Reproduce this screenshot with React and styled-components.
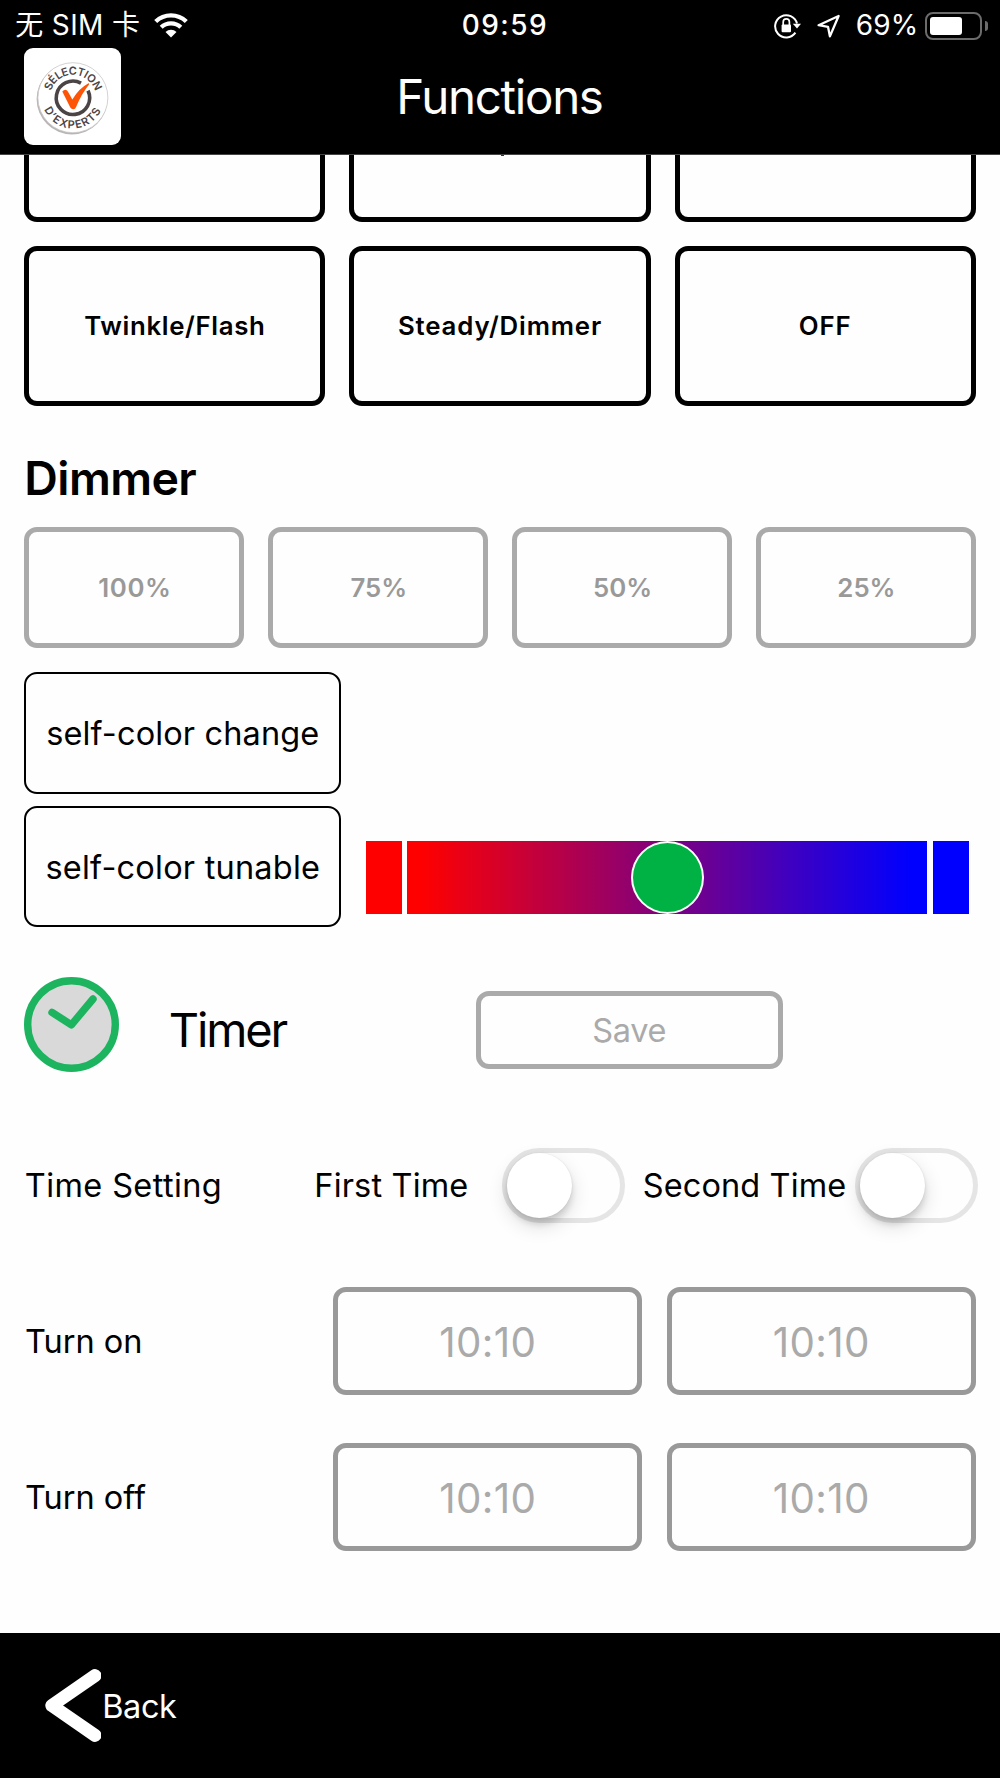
import React from "react";
import styled, { createGlobalStyle } from "styled-components";

const GlobalStyle = createGlobalStyle`
  *, *::before, *::after { box-sizing: border-box; }
  body { margin: 0; background: #fff; }
  button { margin: 0; padding: 0; background: none; font: inherit; }
`;

const Screen = styled.div`
  display: flex;
  flex-direction: column;
  width: 1000px;
  height: 1778px;
  overflow: hidden;
  background: #fefefe;
  color: #000;
  font-family: Inter, "Noto Sans CJK SC", sans-serif;
`;

const Text = styled.span`
  padding-top: ${(p) => p.$drop ?? 2}px;
  font-size: ${(p) => p.$size}px;
  font-weight: ${(p) => p.$weight || 400};
  letter-spacing: ${(p) => p.$track || 0}px;
  line-height: 1.2;
  white-space: nowrap;
`;

/* ---------- header ---------- */

const Header = styled.header`
  flex: none;
  height: 155px;
  background: #000;
  border-bottom: 1px solid #454545;
  color: #fff;
`;

const StatusBar = styled.div`
  display: grid;
  grid-template-columns: 446.4px 1fr auto;
  align-items: center;
  height: 48px;
  padding: 3px 12px 0 15.3px;
`;

const StatusGroup = styled.div`
  display: flex;
  align-items: center;
`;

const Carrier = styled(Text)`
  width: 139.4px;
`;

const WifiSlot = styled.span`
  display: flex;
  margin-left: -1px;
`;

const LockSlot = styled.span`
  display: flex;
  width: 43px;
`;

const ArrowSlot = styled.span`
  display: flex;
  width: 39px;
`;

const Percent = styled(Text)`
  width: 69.3px;
`;

const Battery = styled.div`
  width: 57px;
  height: 28px;
  padding: 3px;
  border: 2px solid #6c6c6c;
  border-radius: 8px;
`;

const BatteryLevel = styled.div`
  width: 68.5%;
  height: 18px;
  border-radius: 3px;
  background: #fff;
`;

const BatteryTip = styled.div`
  width: 3px;
  height: 10px;
  margin-left: 3px;
  border-radius: 0 3px 3px 0;
  background: #6c6c6c;
`;

const NavBar = styled.div`
  display: grid;
  grid-template-columns: 97px 1fr 97px;
  padding: 0 25.4px 0 24.2px;
`;

const LogoTile = styled.div`
  width: 96.8px;
  height: 97px;
  border-radius: 9px;
  background: #fff;
  overflow: hidden;
`;

const NavTitle = styled.h1`
  display: flex;
  justify-content: center;
  align-items: center;
  height: 97px;
  margin: 0;
  font-weight: 400;
`;

/* ---------- content ---------- */

const Content = styled.main`
  flex: 1;
  display: flex;
  flex-direction: column;
  min-height: 0;
  padding: 0 24.4px 0 24.33px;
`;

const CardGrid = styled.div`
  display: grid;
  grid-template-columns: repeat(${(p) => p.$cols}, 1fr);
  column-gap: 24px;
`;

const ScrolledCard = styled.div`
  display: flex;
  justify-content: center;
  height: 67.3px;
  border: 5px solid #000;
  border-top: 0;
  border-radius: 0 0 13px 13px;
`;

const Descender = styled.i`
  width: 3px;
  height: 1px;
  margin-left: 5px;
  background: #333;
`;

const tones = {
  black: { border: "#000", text: "#000" },
  light: { border: "#aaa", text: "#999" },
  save: { border: "#aaa", text: "#aaa" },
  time: { border: "#999", text: "#aaa" },
};

const Card = styled.button`
  display: flex;
  justify-content: center;
  align-items: center;
  width: 100%;
  height: ${(p) => p.$height}px;
  border: ${(p) => p.$line || 5}px solid ${(p) => tones[p.$tone].border};
  border-radius: 13px;
  color: ${(p) => tones[p.$tone].text};
`;

const LevelCard = styled(Card)`
  padding-left: 1.5px;
`;

const ModeGrid = styled(CardGrid)`
  margin-top: 24px;
`;

const SectionTitle = styled.h2`
  display: flex;
  align-items: center;
  height: 56px;
  margin: 44.8px 0 20.5px;
`;

const SelfColor = styled.section`
  display: grid;
  grid-template-columns: 317px 604px;
  column-gap: 24.4px;
  row-gap: 12.4px;
  margin-top: 24.3px;
`;

const EmptyCell = styled.div``;

const ColorSlider = styled.div`
  display: flex;
  align-items: flex-start;
  gap: 5.5px;
  padding-top: 35px;
`;

const EndStop = styled.div`
  width: 36.2px;
  height: 72.6px;
  background: ${(p) => p.$color};
`;

const Track = styled.div`
  display: flex;
  justify-content: center;
  width: 519.6px;
  height: 72.6px;
  background: linear-gradient(90deg, #f00 2.5%, #00f 97%);
`;

const TrackThumb = styled.div`
  width: 73px;
  height: 72.6px;
  border: 2px solid #fff;
  border-radius: 50%;
  background: #00b244;
`;

const TimerRow = styled.section`
  display: grid;
  grid-template-columns: 144.4px 307.1px 306.7px;
  align-items: center;
  height: 106.6px;
  margin-top: 49.2px;
`;

const ClockSlot = styled.div`
  display: flex;
  align-self: start;
`;

const SwitchRow = styled.section`
  display: grid;
  grid-template-columns: 289.5px 187.9px 140.6px 212.4px 122.3px;
  align-items: center;
  height: 75.3px;
  margin: 64.5px -3px 0 0.5px;
`;

const Switch = styled.button`
  display: flex;
  width: 122.3px;
  height: 75px;
  border: 5px solid #e5e5e5;
  border-radius: 38px;
`;

const Knob = styled.span`
  width: 65.5px;
  height: 65px;
  margin-left: -0.4px;
  border-radius: 50%;
  background: #fff;
  box-shadow: 0 8px 20px rgba(0, 0, 0, 0.14), 0 6px 6px rgba(0, 0, 0, 0.12), 0 0 2px rgba(0, 0, 0, 0.1);
`;

const TimeRow = styled.section`
  display: grid;
  grid-template-columns: 308.4px 309px 309px;
  align-items: center;
  margin: ${(p) => p.$top}px 0 0 0.6px;
`;

const TimeCard = styled(Card)`
  width: 309px;
`;

const SecondSlot = styled.div`
  padding-left: 24.4px;
`;

/* ---------- footer ---------- */

const Footer = styled.footer`
  flex: none;
  display: flex;
  align-items: center;
  height: 145px;
  padding-left: 44.6px;
  background: #000;
  color: #fff;
`;

const BackButton = styled.button`
  display: flex;
  align-items: center;
  gap: 1.6px;
  border: 0;
  color: #fff;
`;

/* ---------- drawings ---------- */

const Wifi = () => (
  <svg width="34" height="25" viewBox="0 0 34 25" fill="none" stroke="#fff" strokeWidth="4.3">
    <path d="M1.7 8.45A22.2 22.2 0 0 1 32.3 8.45" />
    <path d="M7.2 14.2A14.2 14.2 0 0 1 26.8 14.2" />
    <path d="M17 24.5L11.5 18.9A8 8 0 0 1 22.5 18.9Z" fill="#fff" stroke="none" />
  </svg>
);

const RotationLock = () => (
  <svg width="28" height="26" viewBox="0 0 28 26" fill="none" stroke="#fff">
    <path d="M21.4 19.6A11.1 11.1 0 1 1 23 10.6" strokeWidth="2" />
    <path d="M18.8 10.8H27L23 15.6Z" fill="#fff" stroke="none" />
    <rect x="7.6" y="11.6" width="9.4" height="7.6" rx="1" fill="#fff" stroke="none" />
    <path d="M9.2 12V8.9a3.1 3.1 0 0 1 6.2 0V12" strokeWidth="1.7" />
  </svg>
);

const LocationArrow = () => (
  <svg width="24" height="24" viewBox="0 0 24 24" fill="none" stroke="#fff" strokeWidth="2.3" strokeLinejoin="round">
    <path d="M1.6 11.2L21.6 2L12.9 22.4L11 12.8Z" />
  </svg>
);

const Logo = () => (
  <svg width="97" height="97" viewBox="24.3 48 97 97">
    <defs>
      <path id="logo-top" d="M50.2 97.7A23 23 0 0 1 96.2 97.7" />
      <path id="logo-bottom" d="M42.4 97.7A30.8 30.8 0 0 0 104 97.7" />
    </defs>
    <circle cx="72.3" cy="99" r="35.4" fill="#b9b5b5" />
    <circle cx="73.2" cy="97.7" r="35" fill="#fff" stroke="#c9c7c7" strokeWidth="0.8" />
    <g fill="#4b4445" fontFamily="Inter, sans-serif" fontWeight="600" fontSize="11" textAnchor="middle">
      <text letterSpacing="-0.4">
        <textPath href="#logo-top" startOffset="50%">SÉLECTION</textPath>
      </text>
      <text letterSpacing="1.3">
        <textPath href="#logo-bottom" startOffset="50%">D’EXPERTS</textPath>
      </text>
    </g>
    <path d="M81.3 83.2A16.7 16.7 0 1 0 88.3 90.6" fill="none" stroke="#4b4445" strokeWidth="3.6" />
    <path
      d="M62.6 91.6Q65 89 67 90.2Q68.6 91.6 72.6 99.6Q79 88.4 88.4 83.4Q90 83 89.2 84.8Q82 93.6 76.4 107Q75.6 109.2 73.6 109.2Q71.6 109.2 70.6 107.4Z"
      fill="#fd5505"
    />
  </svg>
);

const Clock = () => (
  <svg width="95" height="95" viewBox="0 0 95 95" fill="none" stroke="#1cb45f">
    <circle cx="47.5" cy="47.5" r="43.8" fill="#d9d9d9" strokeWidth="7.4" />
    <path d="M28 35.4L47.4 47.8L69 22" strokeWidth="7.4" strokeLinecap="round" strokeLinejoin="round" />
  </svg>
);

const Chevron = () => (
  <svg width="56" height="73" viewBox="0 0 56 73" fill="none" stroke="#fff">
    <path d="M50 6.6L6.8 36.5L50 66.4" strokeWidth="13" strokeLinecap="round" strokeLinejoin="round" />
  </svg>
);

/* ---------- screen ---------- */

const modes = [
  { label: "Twinkle/Flash", track: 0.66 },
  { label: "Steady/Dimmer", track: 0.84 },
  { label: "OFF", track: 0.85 },
];

const levels = [
  { label: "100%", track: 0.6 },
  { label: "75%", track: 0 },
  { label: "50%", track: 0 },
  { label: "25%", track: 0 },
];

const times = [
  { label: "Turn on", first: "10:10", second: "10:10", top: 64.2 },
  { label: "Turn off", first: "10:10", second: "10:10", top: 47.6 },
];

export default function App() {
  return (
    <Screen>
      <GlobalStyle />
      <Header>
        <StatusBar>
          <StatusGroup>
            <Carrier $size={28} $track={0.35} $drop={0}>无 SIM 卡</Carrier>
            <WifiSlot><Wifi /></WifiSlot>
          </StatusGroup>
          <Text $size={28} $weight={500} $track={1.45} $drop={0}>09:59</Text>
          <StatusGroup>
            <LockSlot><RotationLock /></LockSlot>
            <ArrowSlot><LocationArrow /></ArrowSlot>
            <Percent $size={28} $track={0.15} $drop={0}>69%</Percent>
            <Battery><BatteryLevel /></Battery>
            <BatteryTip />
          </StatusGroup>
        </StatusBar>
        <NavBar>
          <LogoTile><Logo /></LogoTile>
          <NavTitle><Text $size={47.5} $track={-1.33} $drop={0}>Functions</Text></NavTitle>
        </NavBar>
      </Header>

      <Content>
        <CardGrid $cols={3}>
          <ScrolledCard />
          <ScrolledCard><Descender /></ScrolledCard>
          <ScrolledCard />
        </CardGrid>
        <ModeGrid $cols={3}>
          {modes.map((m) => (
            <Card key={m.label} $height={159.3} $tone="black">
              <Text $size={25.8} $weight={600} $track={m.track}>{m.label}</Text>
            </Card>
          ))}
        </ModeGrid>

        <SectionTitle>
          <Text $size={46.5} $weight={600} $track={-0.6} $drop={1}>Dimmer</Text>
        </SectionTitle>
        <CardGrid $cols={4}>
          {levels.map((l) => (
            <LevelCard key={l.label} $height={121.3} $tone="light">
              <Text $size={25.8} $weight={600} $track={l.track}>{l.label}</Text>
            </LevelCard>
          ))}
        </CardGrid>

        <SelfColor>
          <Card $height={121.3} $tone="black" $line={2}>
            <Text $size={32.5} $track={0.13} $drop={1}>self-color change</Text>
          </Card>
          <EmptyCell />
          <Card $height={121.3} $tone="black" $line={2}>
            <Text $size={32.5} $track={0.22} $drop={1.4}>self-color tunable</Text>
          </Card>
          <ColorSlider>
            <EndStop $color="#f00" />
            <Track><TrackThumb /></Track>
            <EndStop $color="#00f" />
          </ColorSlider>
        </SelfColor>

        <TimerRow>
          <ClockSlot><Clock /></ClockSlot>
          <Text $size={47} $track={-2.1} $drop={1}>Timer</Text>
          <Card $height={77.7} $tone="save">
            <Text $size={32.5} $track={-0.3}>Save</Text>
          </Card>
        </TimerRow>

        <SwitchRow>
          <Text $size={32.5} $track={0.38} $drop={1}>Time Setting</Text>
          <Text $size={32.5} $track={0.16} $drop={1}>First Time</Text>
          <Switch aria-label="First Time"><Knob /></Switch>
          <Text $size={32.5} $track={0.1} $drop={1}>Second Time</Text>
          <Switch aria-label="Second Time"><Knob /></Switch>
        </SwitchRow>

        {times.map((t) => (
          <TimeRow key={t.label} $top={t.top}>
            <Text $size={32.5} $drop={1}>{t.label}</Text>
            <TimeCard $height={108.2} $tone="time">
              <Text $size={40.3} $track={0.35} $drop={3.4}>{t.first}</Text>
            </TimeCard>
            <SecondSlot>
              <TimeCard $height={108.2} $tone="time">
                <Text $size={40.3} $track={0.35} $drop={3.4}>{t.second}</Text>
              </TimeCard>
            </SecondSlot>
          </TimeRow>
        ))}
      </Content>

      <Footer>
        <BackButton>
          <Chevron />
          <Text $size={32.5} $track={-0.4}>Back</Text>
        </BackButton>
      </Footer>
    </Screen>
  );
}
